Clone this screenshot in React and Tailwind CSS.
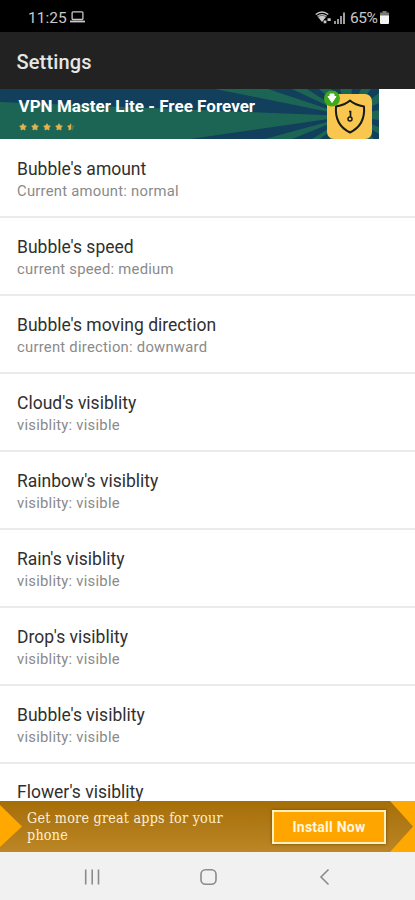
import { Star } from "lucide-react";

const settings = [
  { title: "Bubble's amount", value: "Current amount: normal" },
  { title: "Bubble's speed", value: "current speed: medium" },
  { title: "Bubble's moving direction", value: "current direction: downward" },
  { title: "Cloud's visiblity", value: "visiblity: visible" },
  { title: "Rainbow's visiblity", value: "visiblity: visible" },
  { title: "Rain's visiblity", value: "visiblity: visible" },
  { title: "Drop's visiblity", value: "visiblity: visible" },
  { title: "Bubble's visiblity", value: "visiblity: visible" },
];

function StatusBar() {
  return (
    <div className="h-8 shrink-0 bg-black flex items-center justify-between pl-[28px] pr-[26px] pt-[3px] text-[#c9c9c9]">
      <div className="flex items-center">
        <span className="w-[39px] text-[15.5px] leading-4 whitespace-nowrap">11:25</span>
        <svg className="ml-[3px] -mt-px" width="15" height="12" viewBox="0 0 15 12" fill="none">
          <rect x="2.1" y="0.8" width="10.8" height="7.7" rx="1" stroke="currentColor" strokeWidth="1.3" />
          <path d="M0 10.5h15" stroke="currentColor" strokeWidth="1.8" />
        </svg>
      </div>
      <div className="flex items-center">
        <svg width="17" height="13" viewBox="0 0 17 13" fill="none">
          <path d="M0.7 3.5Q7 -1.5 13.3 3.5" stroke="currentColor" strokeWidth="1.5" />
          <path d="M2 4.8Q7 1.3 12 4.8L7 11z" fill="currentColor" />
          <path d="M2.8 5.6Q7 2.8 11.2 5.6" stroke="#222" strokeWidth="0.6" />
          <path d="M8.6 12.3v-2.8h2.8v2.8zM12.5 10V7.2h3.2V10z" fill="currentColor" />
        </svg>
        <svg className="ml-[2px]" width="12" height="12" viewBox="0 0 12 12" fill="currentColor">
          <path d="M0 9h2v3H0zM3 7h2v5H3zM6 4h2v8H6z" opacity=".75" />
          <path d="M9.2 0.5h1.6V12H9.2z" />
        </svg>
        <span className="ml-[4px] w-[28px] text-[15.5px] leading-4 tracking-[-0.4px] whitespace-nowrap">65%</span>
        <svg className="ml-[2px]" width="9" height="13" viewBox="0 0 9 13">
          <path d="M2.5 0h4v1.5H9V5H0V1.5h2.5z" fill="#777" />
          <path d="M0 4.5h9V12q0 1-1 1H1q-1 0-1-1z" fill="#f3f3f3" />
        </svg>
      </div>
    </div>
  );
}

function VpnBanner() {
  return (
    <div className="relative h-[50px] w-[378.5px] shrink-0 overflow-hidden bg-[#1c6555]">
      <svg className="absolute inset-0" width="379" height="50" viewBox="0 0 379 50">
        <g fill="#113f5c">
          <path d="M349 27L0 13V0h215z" />
          <path d="M349 27L268 0h24zM349 27L307 0h12zM349 27L331 0h9zM349 27L352 0h9zM349 27L371 0h8v4zM349 27L379 14v7zM349 27L379 31v7zM349 27L379 45v5h-5zM349 27L349 50h-9zM349 27L329 50h-9zM349 27L312 50h-20zM349 27L265 50h-75z" />
        </g>
      </svg>
      <div className="relative pl-[18.5px] pt-[5.5px]">
        <p className="text-[17px] leading-[22px] font-bold tracking-[0.03px] text-white whitespace-nowrap">
          VPN Master Lite - Free Forever
        </p>
        <div className="flex gap-[4px] mt-[6px]">
          {[1, 2, 3, 4].map((n) => (
            <Star key={n} size={8} fill="#e5b450" className="text-[#e5b450]" />
          ))}
          <span className="relative size-2">
            <Star size={8} fill="#4d7b55" className="absolute text-[#4d7b55]" />
            <span className="absolute h-2 w-1 overflow-hidden">
              <Star size={8} fill="#e5b450" className="text-[#e5b450]" />
            </span>
          </span>
        </div>
      </div>
      <svg className="absolute left-[323px] top-[1px]" width="51" height="49" viewBox="0 0 51 49" fill="none">
        <rect x="4" y="4" width="45" height="45" rx="7" fill="#f9c750" />
        <path
          d="M27 10.5Q32 15 41 16.5Q42.5 35 27 42.5Q11.5 35 13 16.5Q22 15 27 10.5z"
          stroke="#151b17"
          strokeWidth="2"
          strokeLinejoin="round"
        />
        <circle cx="27" cy="29" r="2" stroke="#151b17" strokeWidth="1.5" />
        <path d="M26 21.5h1.5V27" stroke="#151b17" strokeWidth="1.7" />
        <circle cx="9" cy="8.5" r="8" fill="#3eaa18" />
        <path d="M7 4h4v2.500h2L9 12.500 5 6.500h2z" fill="#fff" stroke="#fff" strokeLinejoin="round" />
      </svg>
    </div>
  );
}

function InstallBanner() {
  return (
    <div className="relative h-[51px] shrink-0 flex items-center justify-between pl-[27px] pr-[29px] bg-linear-to-b from-[#a66e05] to-[#bb8625]">
      <svg className="absolute inset-0" width="415" height="51" viewBox="0 0 415 51" fill="#ffa800">
        <path d="M0 4L22 25.5L0 46z" />
        <path d="M390 0h25v51H390l23-25.5z" />
      </svg>
      <p className="relative w-[210px] pt-px font-['DejaVu_Serif_Condensed','DejaVu_Serif',serif] text-[14.2px] leading-[17px] tracking-[0.23px] text-[#fcefd2]">
        Get more great apps for your phone
      </p>
      <button className="relative h-[34px] w-[114px] mt-px border-2 border-[#fff0bd] bg-[#ffa500] text-[14px] font-bold tracking-[0.25px] text-[#fff6df] shadow-[0_0_3px_#704800]">
        Install Now
      </button>
    </div>
  );
}

function NavBar() {
  return (
    <div className="h-12 shrink-0 bg-[#f1f1f1]">
      <svg width="415" height="48" viewBox="0 0 415 48" fill="none" stroke="#8b8b8b" strokeWidth="1.6">
        <path d="M85.7 17.5v15M92.2 17.5v15M98.5 17.5v15" />
        <rect x="201" y="17.8" width="15" height="14.5" rx="4.5" />
        <path d="M328.5 17.5L321 25l7.5 7.5" />
      </svg>
    </div>
  );
}

export default function App() {
  return (
    <div className="h-[900px] w-[415px] overflow-hidden flex flex-col bg-white font-[Roboto,sans-serif]">
      <StatusBar />
      <header className="h-[57px] shrink-0 bg-[#222222] flex items-center pl-[16.5px]">
        <h1 className="text-[20px] leading-6 font-medium tracking-[0.15px] text-[#e6e6e6] pt-[2px]">Settings</h1>
      </header>
      <VpnBanner />
      <ul className="shrink-0">
        {settings.map((item) => (
          <li key={item.title} className="h-[78px] first:h-[79px] first:pt-[18.5px] pt-[17.5px] pl-[17px] border-b-2 border-[#ebebeb]">
            <p className="text-[17.5px] leading-[22px] text-[#303030]">{item.title}</p>
            <p className="text-[14.8px] leading-[23px] text-[#8a8a8a] tracking-[0.25px]">{item.value}</p>
          </li>
        ))}
      </ul>
      {/* last row is partly covered by the ad */}
      <div className="grow pt-[17px] pl-[17px]">
        <p className="h-0 text-[17.5px] leading-[22px] text-[#303030]">Flower's visiblity</p>
      </div>
      <InstallBanner />
      <NavBar />
    </div>
  );
}
